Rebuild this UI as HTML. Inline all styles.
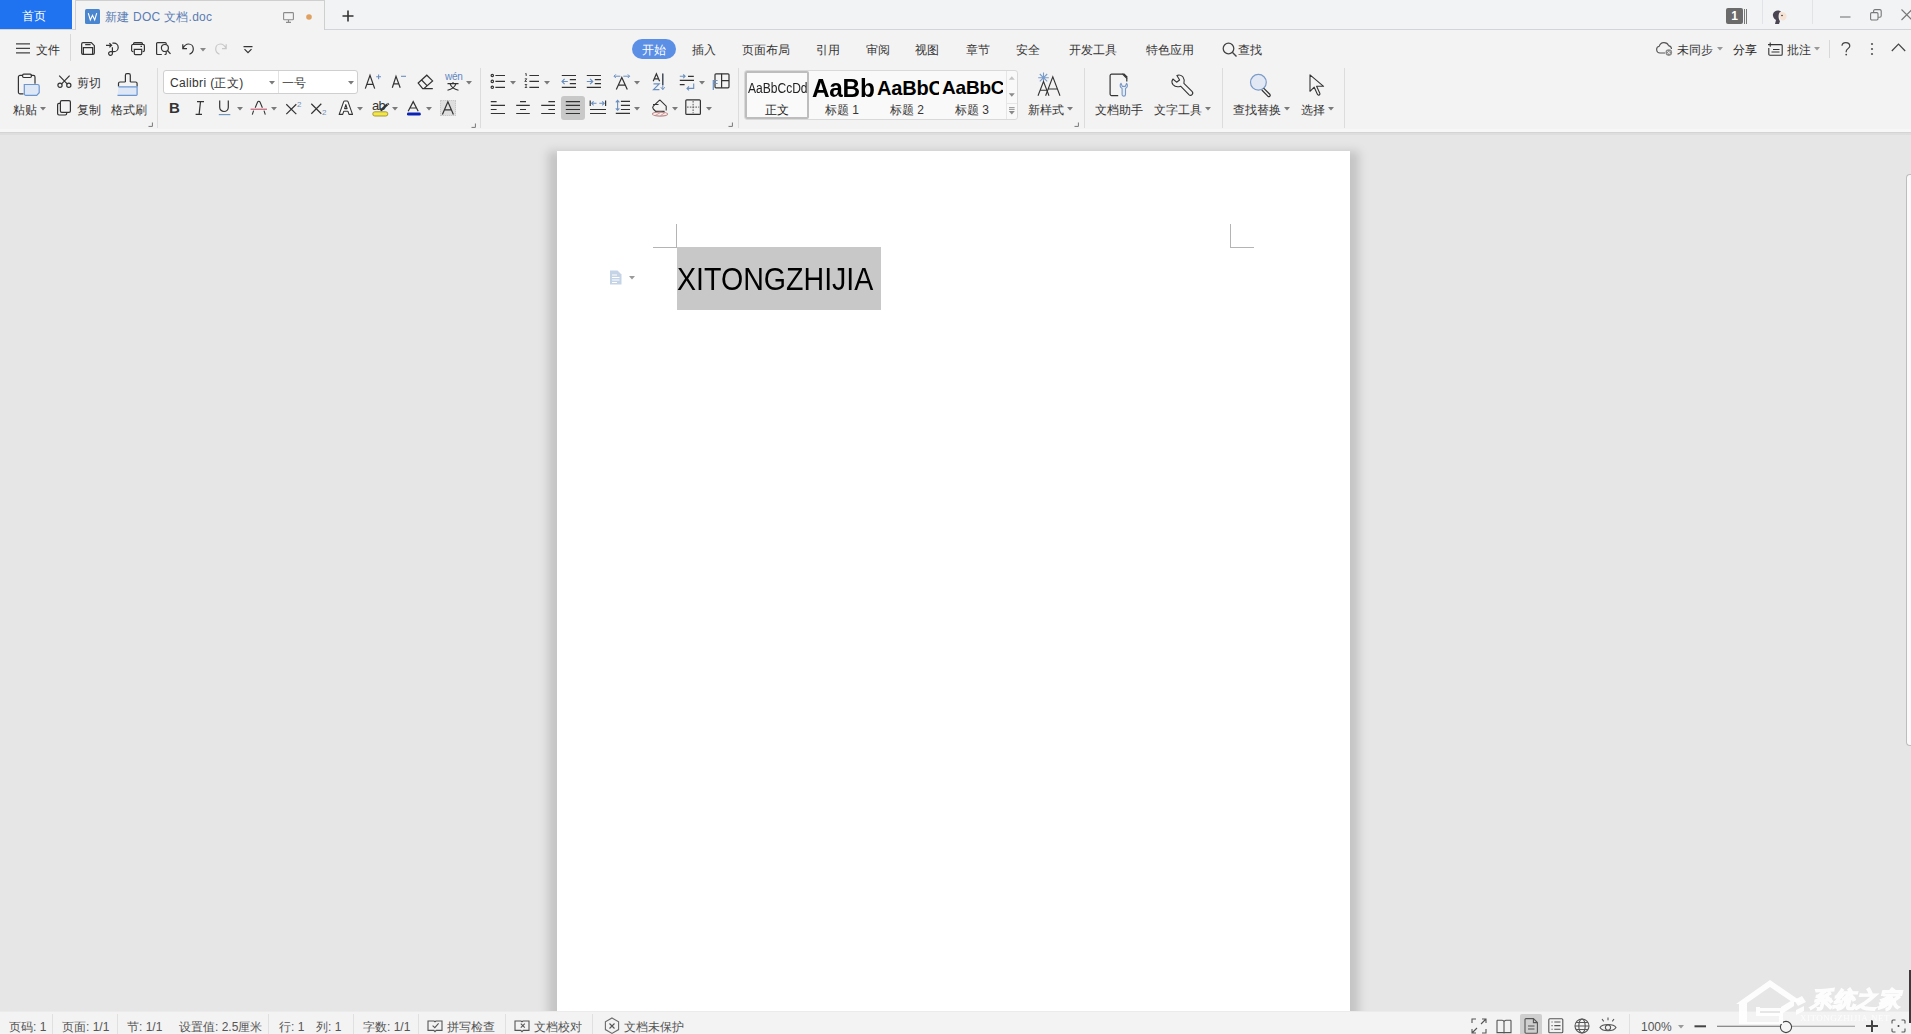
<!DOCTYPE html>
<html><head><meta charset="utf-8">
<style>
*{box-sizing:border-box;margin:0;padding:0}
html,body{width:1911px;height:1034px;overflow:hidden;background:#f3f3f3;font-family:"Liberation Sans",sans-serif;color:#353535}
.a{position:absolute}
.t{position:absolute;font-size:12px;line-height:14px;white-space:nowrap;z-index:2}
svg{position:absolute;overflow:visible}
#tabbar{left:0;top:0;width:1911px;height:29px;background:#f2f3f5}
#canvas{left:0;top:132px;width:1911px;height:879px;background:#e6e6e6}
#page{left:557px;top:151px;width:793px;height:860px;background:#fff}
#status{left:0;top:1011px;width:1911px;height:23px;background:#f3f3f3;border-top:1px solid #ebebeb}
.sep{position:absolute;width:1px;background:#dcdcdc}
.dd{position:absolute;width:0;height:0;border-left:3px solid transparent;border-right:3px solid transparent;border-top:3px solid #707070}
</style></head><body>
<div id="tabbar" class="a"></div>
<div class="a" style="left:0;top:29px;width:1911px;height:1px;background:#d2d4d8"></div>
<div class="a" style="left:0;top:0;width:72px;height:29px;background:#1f72f0"></div>
<div class="t" style="left:22px;top:9px;color:#fff">首页</div>
<div class="a" style="left:75px;top:0;width:250px;height:30px;background:#f3f3f3;border:1px solid #cfcfcf;border-bottom:none"></div>

<div id="canvas" class="a"></div>
<div class="a" style="left:0;top:129px;width:1911px;height:3px;background:#f7f7f7"></div>
<div class="a" style="left:0;top:132px;width:1911px;height:1px;background:#d4d4d4"></div><div class="a" style="left:0;top:133px;width:1911px;height:2px;background:#dedede"></div>
<div class="a" style="left:548px;top:151px;width:811px;height:880px;background:rgba(0,0,0,.145);filter:blur(5px)"></div><div id="page" class="a"></div>
<div id="status" class="a"></div>

<!-- tab bar -->
<div class="t" style="left:105px;top:10px;color:#5a7cb4;letter-spacing:0.25px">新建 DOC 文档.doc</div>
<!-- menu row -->
<div class="t" style="left:36px;top:43px;color:#333">文件</div>
<div class="a" style="left:632px;top:39px;width:44px;height:20px;border-radius:10px;background:#5b8fe6"></div>
<div class="t" style="left:642px;top:43px;color:#fff">开始</div>
<div class="t" style="left:692px;top:43px">插入</div>
<div class="t" style="left:742px;top:43px">页面布局</div>
<div class="t" style="left:816px;top:43px">引用</div>
<div class="t" style="left:866px;top:43px">审阅</div>
<div class="t" style="left:915px;top:43px">视图</div>
<div class="t" style="left:966px;top:43px">章节</div>
<div class="t" style="left:1016px;top:43px">安全</div>
<div class="t" style="left:1069px;top:43px">开发工具</div>
<div class="t" style="left:1146px;top:43px">特色应用</div>
<div class="t" style="left:1238px;top:43px">查找</div>
<div class="t" style="left:1677px;top:43px">未同步</div>
<div class="t" style="left:1733px;top:43px;color:#222">分享</div>
<div class="t" style="left:1787px;top:43px">批注</div>
<!-- ribbon labels -->
<div class="t" style="left:13px;top:103px">粘贴</div>
<div class="t" style="left:77px;top:76px">剪切</div>
<div class="t" style="left:77px;top:103px">复制</div>
<div class="t" style="left:111px;top:103px">格式刷</div>
<div class="t" style="left:765px;top:103px;color:#222">正文</div>
<div class="t" style="left:825px;top:103px">标题 1</div>
<div class="t" style="left:890px;top:103px">标题 2</div>
<div class="t" style="left:955px;top:103px">标题 3</div>
<div class="t" style="left:1028px;top:103px">新样式</div>
<div class="t" style="left:1095px;top:103px">文档助手</div>
<div class="t" style="left:1154px;top:103px">文字工具</div>
<div class="t" style="left:1233px;top:103px">查找替换</div>
<div class="t" style="left:1301px;top:103px">选择</div>
<!-- status -->
<div class="t" style="left:9px;top:1020px;color:#555">页码: 1</div>
<div class="t" style="left:62px;top:1020px;color:#555">页面: 1/1</div>
<div class="t" style="left:127px;top:1020px;color:#555">节: 1/1</div>
<div class="t" style="left:179px;top:1020px;color:#555">设置值: 2.5厘米</div>
<div class="t" style="left:279px;top:1020px;color:#555">行: 1</div>
<div class="t" style="left:316px;top:1020px;color:#555">列: 1</div>
<div class="t" style="left:363px;top:1020px;color:#555">字数: 1/1</div>
<div class="t" style="left:447px;top:1020px;color:#555">拼写检查</div>
<div class="t" style="left:534px;top:1020px;color:#555">文档校对</div>
<div class="t" style="left:624px;top:1020px;color:#555">文档未保护</div>
<div class="t" style="left:1641px;top:1020px;color:#555">100%</div>

<!-- page content -->
<div class="a" style="left:677px;top:247px;width:204px;height:63px;background:#c8c8c8"></div>
<div class="a" style="left:676px;top:224px;width:1px;height:24px;background:#b4b4b4"></div>
<div class="a" style="left:653px;top:247px;width:24px;height:1px;background:#b4b4b4"></div>
<div class="a" style="left:1230px;top:224px;width:1px;height:24px;background:#b4b4b4"></div>
<div class="a" style="left:1230px;top:247px;width:24px;height:1px;background:#b4b4b4"></div>
<div id="xt" class="t" style="left:677px;top:261px;font-size:30.5px;line-height:36px;color:#000;transform:scaleX(0.937);transform-origin:0 0">XITONGZHIJIA</div>
<svg style="left:85px;top:9px;" width="15" height="15" viewBox="0 0 15 15"><rect width="15" height="15" rx="1.5" fill="#4a86d0"/><path d="M3.3 4.2L5.3 11L7.5 6.2L9.7 11L11.7 4.2" fill="none" stroke="#fff" stroke-width="1.1"/></svg>
<svg style="left:283px;top:12px;" width="11" height="11" viewBox="0 0 11 11"><rect x="0.6" y="0.6" width="9.8" height="7.2" rx="0.8" fill="none" stroke="#8a8a8a" stroke-width="1.1"/><path d="M5.5 8V10.3M3 10.4H8" stroke="#8a8a8a" stroke-width="1.1"/></svg>
<svg style="left:306px;top:14px;" width="6" height="6" viewBox="0 0 6 6"><circle cx="3" cy="3" r="2.8" fill="#e0a060"/></svg>
<svg style="left:342px;top:10px;" width="12" height="12" viewBox="0 0 12 12"><path d="M6 0.5V11.5M0.5 6H11.5" stroke="#333" stroke-width="1.6"/></svg>
<div class="a" style="left:1726px;top:8px;width:17px;height:16px;border-radius:2px;background:#6b6b6b"></div>
<div class="t" style="left:1726px;top:9px;width:17px;text-align:center;color:#fff;font-size:12px;font-weight:bold">1</div>
<div class="a" style="left:1744px;top:9px;width:1px;height:15px;background:#777"></div>
<div class="a" style="left:1746px;top:9px;width:1px;height:15px;background:#777"></div>
<div class="a" style="left:1762px;top:0px;width:1px;height:24px;background:#e2e3e6"></div>
<div class="a" style="left:1812px;top:0px;width:1px;height:24px;background:#e2e3e6"></div>
<svg style="left:1771px;top:9px;" width="17" height="15" viewBox="0 0 17 15"><path d="M2 5C3 1.5 7 0.5 10 2.5L8 4.5C7 8 8 11 9 12L8 15H4L5 11C2.5 9.5 1.5 7 2 5Z" fill="#4a4452"/><path d="M8.5 3.5C11 2.5 14.5 3.5 15.5 6C16 8 15 11 12 11.5C10 11.5 9 10 8.5 8Z" fill="#f5e3d5"/><circle cx="11" cy="6.5" r="0.8" fill="#333"/></svg>
<svg style="left:1840px;top:16px;" width="11" height="2" viewBox="0 0 11 2"><path d="M0 1H10.5" stroke="#777" stroke-width="1.1"/></svg>
<svg style="left:1870px;top:9px;" width="12" height="12" viewBox="0 0 12 12"><rect x="0.6" y="3.6" width="7.4" height="7.4" rx="1.2" fill="none" stroke="#777" stroke-width="1.1"/><path d="M3.6 3.5V2.2A1.4 1.4 0 0 1 5 0.6H9.8A1.4 1.4 0 0 1 11.2 2V6.8A1.4 1.4 0 0 1 9.8 8.2H8.1" fill="none" stroke="#777" stroke-width="1.1"/></svg>
<svg style="left:1901px;top:9px;" width="12" height="12" viewBox="0 0 12 12"><path d="M0.5 0.5L11 11M11 0.5L0.5 11" stroke="#777" stroke-width="1.1"/></svg>
<svg style="left:16px;top:43px;" width="14" height="11" viewBox="0 0 14 11"><path d="M0 0.8H14M0 5.3H14M0 9.8H14" stroke="#444" stroke-width="1.2"/></svg>
<div class="a" style="left:70px;top:34px;width:1px;height:27px;background:#d8d8d8"></div>
<svg style="left:81px;top:42px;" width="14" height="13" viewBox="0 0 14 13"><path d="M0.65 2A1.4 1.4 0 0 1 2 0.65H10.3L13.35 3.7V11A1.4 1.4 0 0 1 12 12.35H2A1.4 1.4 0 0 1 0.65 11Z M4.2 2.6H9.6 M2.4 12.3V5.6H11.6V12.3" fill="none" stroke="#333" stroke-width="1.2"/></svg>
<svg style="left:106px;top:42px;" width="14" height="14" viewBox="0 0 14 14"><path d="M0 3.3H5.3M3.4 1.2L5.6 3.3L3.4 5.4" fill="none" stroke="#333" stroke-width="1.2"/><path d="M6.4 1.2H8A4.2 4.2 0 0 1 8 9.6H4.9A1.9 1.9 0 1 0 6.4 11.5V5.2" fill="none" stroke="#333" stroke-width="1.2"/></svg>
<svg style="left:131px;top:42px;" width="14" height="13" viewBox="0 0 14 13"><path d="M2.6 2.3V1.6A1 1 0 0 1 3.6 0.6H10.4A1 1 0 0 1 11.4 1.6V2.3 M2.3 9.6H2A1.4 1.4 0 0 1 0.6 8.2V3.8A1.4 1.4 0 0 1 2 2.4H12A1.4 1.4 0 0 1 13.4 3.8V8.2A1.4 1.4 0 0 1 12 9.6H11.7 M9.5 4.4H11 M3.3 7.3H10.7V11.6A1 1 0 0 1 9.7 12.6H4.3A1 1 0 0 1 3.3 11.6Z" fill="none" stroke="#333" stroke-width="1.2"/></svg>
<svg style="left:156px;top:42px;" width="15" height="14" viewBox="0 0 15 14"><path d="M5.8 12.5H1.6A1 1 0 0 1 0.6 11.5V1.6A1 1 0 0 1 1.6 0.6H9.2A1 1 0 0 1 10.2 1.6V2.4 M10.2 9.5V11.5A1 1 0 0 1 9.2 12.5H8.5" fill="none" stroke="#333" stroke-width="1.2"/><circle cx="8.9" cy="6" r="3.5" fill="none" stroke="#333" stroke-width="1.2"/><path d="M11.4 8.5L14.5 11.8" fill="none" stroke="#333" stroke-width="1.2"/></svg>
<svg style="left:182px;top:43px;" width="12" height="12" viewBox="0 0 12 12"><path d="M1 5.2C2.5 2.3 4.2 1 6.5 1C9.3 1 11.3 3.2 11.3 6C11.3 8.6 9.5 10.4 7.5 11.3M0.8 1.3V5.6H5" fill="none" stroke="#333" stroke-width="1.2"/></svg>
<svg style="left:200px;top:48px" width="6" height="4" viewBox="0 0 6 4"><path d="M0 0H6L3 3.5Z" fill="#888"/></svg>
<svg style="left:215px;top:43px;" width="12" height="12" viewBox="0 0 12 12"><path d="M11 5.2C9.5 2.3 7.8 1 5.5 1C2.7 1 0.7 3.2 0.7 6C0.7 8.6 2.5 10.4 4.5 11.3M11.2 1.3V5.6H7" fill="none" stroke="#c8c8c8" stroke-width="1.2"/></svg>
<svg style="left:243px;top:46px;" width="10" height="8" viewBox="0 0 10 8"><path d="M0.5 0.6H9.5M1.5 3.2L5 6.7L8.5 3.2" fill="none" stroke="#333" stroke-width="1.2"/></svg>
<svg style="left:1222px;top:42px;" width="16" height="16" viewBox="0 0 16 16"><circle cx="6.5" cy="6.5" r="5.3" fill="none" stroke="#444" stroke-width="1.3"/><path d="M10.3 10.3L14.5 14.5" stroke="#444" stroke-width="1.4"/></svg>
<svg style="left:1656px;top:41px;" width="18" height="15" viewBox="0 0 18 15"><path d="M9 12H4A3.4 3.4 0 0 1 3.2 5.3A5 5 0 0 1 12.6 4.6A3.6 3.6 0 0 1 15.5 8" fill="none" stroke="#555" stroke-width="1.1"/><circle cx="12.8" cy="11.6" r="3.3" fill="#8a8a8a"/><path d="M11.4 10.2L14.2 13M14.2 10.2L11.4 13" stroke="#fff" stroke-width="0.9"/></svg>
<svg style="left:1717px;top:47px" width="6" height="4" viewBox="0 0 6 4"><path d="M0 0H6L3 3.5Z" fill="#999"/></svg>
<svg style="left:1768px;top:42px;" width="15" height="14" viewBox="0 0 15 14"><path d="M3.5 2.6H13.2A1 1 0 0 1 14.2 3.6V12.2A1 1 0 0 1 13.2 13.2H1.8A1 1 0 0 1 0.8 12.2V6 M0 2.6H4.4M2.2 0.4V4.8 M5 7.5H11.5M3.5 10H11.5" fill="none" stroke="#333" stroke-width="1.1"/></svg>
<svg style="left:1814px;top:47px" width="6" height="4" viewBox="0 0 6 4"><path d="M0 0H6L3 3.5Z" fill="#999"/></svg>
<div class="a" style="left:1829px;top:40px;width:1px;height:18px;background:#d8d8d8"></div>
<svg style="left:1841px;top:42px;" width="10" height="14" viewBox="0 0 10 14"><path d="M1 3.8C1 1.8 2.8 0.6 4.8 0.6C7 0.6 8.8 2 8.8 4C8.8 6.5 5.2 6.8 5.2 9.3V10.2" fill="none" stroke="#444" stroke-width="1.2"/><circle cx="5.2" cy="12.6" r="0.9" fill="#444"/></svg>
<svg style="left:1870px;top:42px;" width="4" height="14" viewBox="0 0 4 14"><circle cx="2" cy="2" r="1.1" fill="#555"/><circle cx="2" cy="7" r="1.1" fill="#555"/><circle cx="2" cy="12" r="1.1" fill="#555"/></svg>
<svg style="left:1891px;top:43px;" width="15" height="9" viewBox="0 0 15 9"><path d="M0.8 8L7.5 1.2L14.2 8" fill="none" stroke="#444" stroke-width="1.2"/></svg>
<svg style="left:17px;top:73px;" width="24" height="24" viewBox="0 0 24 24"><path d="M5.2 2.4H3A1.6 1.6 0 0 0 1.4 4V19.2A1.6 1.6 0 0 0 3 20.8H6.5 M13.8 2.4H16.4A1.6 1.6 0 0 1 18 4V10.8" fill="none" stroke="#333" stroke-width="1.2"/><rect x="5.6" y="1.1" width="8.8" height="3.4" rx="1.2" fill="none" stroke="#333" stroke-width="1.2"/><path d="M7.3 11.5H20.6A1.6 1.6 0 0 1 22.2 13.1V19.7L19.7 22.3H8.9A1.6 1.6 0 0 1 7.3 20.7Z" fill="#dde7f5" stroke="#6b96cf" stroke-width="1.2"/></svg>
<svg style="left:40px;top:107px" width="6" height="4" viewBox="0 0 6 4"><path d="M0 0H6L3 3.5Z" fill="#7a7a7a"/></svg>
<svg style="left:57px;top:75px;" width="15" height="13" viewBox="0 0 15 13"><path d="M2.2 0.6L10.4 9.1M12.6 0.6L4.4 9.1" fill="none" stroke="#333" stroke-width="1.2"/><circle cx="3" cy="10.3" r="2.1" fill="none" stroke="#333" stroke-width="1.2"/><circle cx="11.8" cy="10.3" r="2.1" fill="none" stroke="#333" stroke-width="1.2"/></svg>
<svg style="left:57px;top:100px;" width="15" height="16" viewBox="0 0 15 16"><path d="M3.2 3.3H2A1.4 1.4 0 0 0 0.6 4.7V13.6A1.4 1.4 0 0 0 2 15H8.3A1.4 1.4 0 0 0 9.7 13.6V12.6" fill="none" stroke="#333" stroke-width="1.2"/><rect x="3.4" y="0.6" width="10" height="11.8" rx="1.4" fill="none" stroke="#333" stroke-width="1.2"/></svg>
<svg style="left:117px;top:73px;" width="23" height="24" viewBox="0 0 23 24"><path d="M8.4 9V2.2A1.5 1.5 0 0 1 9.9 0.7H11.8A1.5 1.5 0 0 1 13.3 2.2V9 M8.4 9H3A1.5 1.5 0 0 0 1.5 10.5V13.5 M13.3 9H18.6A1.5 1.5 0 0 1 20.1 10.5V13.5" fill="none" stroke="#333" stroke-width="1.2"/><path d="M1.5 13.8H20.1V21.5A0.8 0.8 0 0 1 19.3 22.3H0.5" fill="#dde7f5" stroke="#6b96cf" stroke-width="1.2"/></svg>
<svg style="left:148px;top:122px;" width="5" height="5" viewBox="0 0 5 5"><path d="M0.5 4.4H4.4V0.5" fill="none" stroke="#777" stroke-width="1"/></svg>
<div class="a" style="left:157px;top:68px;width:1px;height:60px;background:#dcdcdc"></div>
<div class="a" style="left:163px;top:70px;width:195px;height:24px;background:#fff;border:1px solid #cfcfcf;border-radius:3px"></div>
<div class="a" style="left:278px;top:71px;width:1px;height:22px;background:#e2e2e2"></div>
<div class="t" style="left:170px;top:76px;color:#333;letter-spacing:0.35px">Calibri (正文)</div>
<div class="t" style="left:282px;top:76px;color:#333">一号</div>
<svg style="left:269px;top:81px" width="6" height="4" viewBox="0 0 6 4"><path d="M0 0H6L3 3.5Z" fill="#7a7a7a"/></svg>
<svg style="left:348px;top:81px" width="6" height="4" viewBox="0 0 6 4"><path d="M0 0H6L3 3.5Z" fill="#7a7a7a"/></svg>
<svg style="left:364px;top:74px;" width="18" height="16" viewBox="0 0 18 16"><path d="M1.3 14.6L6 1.3L10.7 14.6M2.7 10.4H9.3" fill="none" stroke="#333" stroke-width="1.2"/><path d="M14.6 0.4V5.2M12.2 2.8H17" fill="none" stroke="#6a8fc0" stroke-width="1.1"/></svg>
<svg style="left:391px;top:75px;" width="16" height="14" viewBox="0 0 16 14"><path d="M1.3 12.7L5 1.3L9.2 12.7M2.6 8.9H8" fill="none" stroke="#333" stroke-width="1.2"/><path d="M10 1.3H15" fill="none" stroke="#6a8fc0" stroke-width="1.1"/></svg>
<svg style="left:417px;top:74px;" width="17" height="16" viewBox="0 0 17 16"><path d="M1.2 9L9.8 1.2L15.6 6.9L6.8 14.7H5.7Z M4.6 6L10.3 11.8 M5.6 14.6H15.8" fill="none" stroke="#333" stroke-width="1.2"/></svg>
<div class="t" style="left:445px;top:71px;font-size:10px;line-height:12px;color:#5f86c0;letter-spacing:-0.3px">wén</div>
<svg style="left:447px;top:82px;" width="12" height="9" viewBox="0 0 12 9"><path d="M6 0V1.6M0.5 1.6H11.5M3 1.8C4.4 5.6 7.6 7.4 11.5 8.2M9 1.8C7.6 5.6 4.4 7.4 0.5 8.2" fill="none" stroke="#333" stroke-width="1.1"/></svg>
<svg style="left:466px;top:81px" width="6" height="4" viewBox="0 0 6 4"><path d="M0 0H6L3 3.5Z" fill="#7a7a7a"/></svg>
<div class="t" style="left:169px;top:100px;font-size:15px;line-height:16px;font-weight:bold;color:#333">B</div>
<svg style="left:195px;top:101px;" width="10" height="14" viewBox="0 0 10 14"><path d="M2 0.6H9M0.6 13.4H7M5.5 0.6L4.1 13.4" fill="none" stroke="#333" stroke-width="1.2"/></svg>
<svg style="left:218px;top:100px;" width="14" height="16" viewBox="0 0 14 16"><path d="M1.7 0.5V7.2A4.3 4.3 0 0 0 10.3 7.2V0.5" fill="none" stroke="#333" stroke-width="1.2"/><path d="M0.8 14.6H12.3" stroke="#6f97bf" stroke-width="1.2"/></svg>
<svg style="left:237px;top:107px" width="6" height="4" viewBox="0 0 6 4"><path d="M0 0H6L3 3.5Z" fill="#7a7a7a"/></svg>
<svg style="left:250px;top:100px;" width="18" height="16" viewBox="0 0 18 16"><path d="M2.3 14.6L3.6 10.6M5.2 7.8L7.6 2A1.3 1.3 0 0 1 10 2L12.4 7.8M14 10.6L15.3 14.6" fill="none" stroke="#333" stroke-width="1.1"/><path d="M0.6 9.2H17" stroke="#c0506a" stroke-width="1.1"/></svg>
<svg style="left:271px;top:107px" width="6" height="4" viewBox="0 0 6 4"><path d="M0 0H6L3 3.5Z" fill="#7a7a7a"/></svg>
<svg style="left:285px;top:101px;" width="17" height="14" viewBox="0 0 17 14"><path d="M1.3 3.2L11.3 13.1M11.3 3.2L1.3 13.1" fill="none" stroke="#333" stroke-width="1.2"/></svg>
<div class="t" style="left:297px;top:100px;font-size:8px;line-height:9px;color:#6f8fb8">2</div>
<svg style="left:310px;top:101px;" width="17" height="15" viewBox="0 0 17 15"><path d="M1.3 2.8L11.3 12.7M11.3 2.8L1.3 12.7" fill="none" stroke="#333" stroke-width="1.2"/></svg>
<div class="t" style="left:322px;top:108px;font-size:8px;line-height:9px;color:#6f8fb8">2</div>
<svg style="left:338px;top:100px;" width="16" height="16" viewBox="0 0 16 16"><path d="M1.2 14.4L5.7 1.6A1 1 0 0 1 6.6 1H9.1A1 1 0 0 1 10 1.6L14.5 14.4H11L10 11.3H5.7L4.7 14.4Z M7.85 4.6L6.6 8.6H9.1Z" fill="#fafafa" stroke="#333" stroke-width="1.1" stroke-linejoin="round"/></svg>
<svg style="left:357px;top:107px" width="6" height="4" viewBox="0 0 6 4"><path d="M0 0H6L3 3.5Z" fill="#7a7a7a"/></svg>
<div class="t" style="left:372px;top:99px;font-size:13px;line-height:14px;color:#333;letter-spacing:-0.8px">ab</div>
<svg style="left:379px;top:102px;" width="11" height="10" viewBox="0 0 11 10"><path d="M1.6 8.6L8.4 2.4" stroke="#333" stroke-width="2.3"/><path d="M8.6 1.2L10 2.6" stroke="#333" stroke-width="1.2"/></svg>
<svg style="left:372px;top:111px;" width="17" height="6" viewBox="0 0 17 6"><rect x="0.8" y="0.8" width="15" height="4.2" rx="2" fill="#f2e64a" stroke="#a89a30" stroke-width="1"/></svg>
<svg style="left:392px;top:107px" width="6" height="4" viewBox="0 0 6 4"><path d="M0 0H6L3 3.5Z" fill="#7a7a7a"/></svg>
<svg style="left:406px;top:100px;" width="16" height="16" viewBox="0 0 16 16"><path d="M2.2 11.2L7.2 1.6L12.2 11.2M3.8 8H10.6" fill="none" stroke="#333" stroke-width="1.2"/><rect x="1" y="12.6" width="13.8" height="3" rx="1.4" fill="#0a23b4"/></svg>
<svg style="left:426px;top:107px" width="6" height="4" viewBox="0 0 6 4"><path d="M0 0H6L3 3.5Z" fill="#7a7a7a"/></svg>
<div class="a" style="left:440px;top:100px;width:16px;height:16px;background:#dedede;border:1px dotted #c8c8c8"></div>
<svg style="left:441px;top:101px;" width="14" height="14" viewBox="0 0 14 14"><path d="M1.4 13.4L6.9 0.8L12.4 13.4M3.4 8.9H10.4" fill="none" stroke="#333" stroke-width="1.2"/></svg>
<svg style="left:471px;top:123px;" width="5" height="5" viewBox="0 0 5 5"><path d="M0.5 4.4H4.4V0.5" fill="none" stroke="#777" stroke-width="1"/></svg>
<div class="a" style="left:480px;top:68px;width:1px;height:60px;background:#dcdcdc"></div>
<svg style="left:490px;top:74px;" width="16" height="15" viewBox="0 0 16 15"><circle cx="2.3" cy="1.5" r="1.2" fill="none" stroke="#333" stroke-width="1.2"/><circle cx="2.3" cy="7.4" r="1.2" fill="none" stroke="#333" stroke-width="1.2"/><circle cx="2.3" cy="13.3" r="1.2" fill="none" stroke="#333" stroke-width="1.2"/><path d="M5.4 1.5H15M5.4 7.4H15M5.4 13.3H15" fill="none" stroke="#333" stroke-width="1.2"/></svg>
<svg style="left:510px;top:81px" width="6" height="4" viewBox="0 0 6 4"><path d="M0 0H6L3 3.5Z" fill="#7a7a7a"/></svg>
<svg style="left:524px;top:73px;" width="16" height="16" viewBox="0 0 16 16"><path d="M1.2 0.8L2.2 0.5V3 M0.8 5.8H2.8L0.8 8.4H2.9 M0.8 11.5H2.8L1.7 13L2.8 14.5H0.8" fill="none" stroke="#333" stroke-width="0.9"/><path d="M5.4 2.5H15M5.4 8.4H15M5.4 14.3H15" fill="none" stroke="#333" stroke-width="1.2"/></svg>
<svg style="left:544px;top:81px" width="6" height="4" viewBox="0 0 6 4"><path d="M0 0H6L3 3.5Z" fill="#7a7a7a"/></svg>
<svg style="left:561px;top:74px;" width="16" height="15" viewBox="0 0 16 15"><path d="M0.8 1.5H15M8.8 5.6H15M8.8 9.6H15M0.8 13.3H15" fill="none" stroke="#333" stroke-width="1.2"/><path d="M1.2 7.5H6.8M3.6 4.8L1 7.5L3.6 10.2" fill="none" stroke="#6a8fc0" stroke-width="1.2"/></svg>
<svg style="left:586px;top:74px;" width="16" height="15" viewBox="0 0 16 15"><path d="M0.8 1.5H15M8.8 5.6H15M8.8 9.6H15M0.8 13.3H15" fill="none" stroke="#333" stroke-width="1.2"/><path d="M0.8 7.5H6.5M4.1 4.8L6.7 7.5L4.1 10.2" fill="none" stroke="#6a8fc0" stroke-width="1.2"/></svg>
<svg style="left:490px;top:100px;" width="16" height="15" viewBox="0 0 16 15"><path d="M0.8 1.6H6.6M0.8 5.4H15M0.8 9.5H6.6M0.8 13.5H15" fill="none" stroke="#333" stroke-width="1.2"/></svg>
<svg style="left:515px;top:100px;" width="16" height="15" viewBox="0 0 16 15"><path d="M5 1.6H11M1.2 5.4H14.8M5 9.5H11M1.2 13.5H14.8" fill="none" stroke="#333" stroke-width="1.2"/></svg>
<svg style="left:540px;top:100px;" width="16" height="15" viewBox="0 0 16 15"><path d="M8.4 1.6H15M1.2 5.4H15M8.4 9.5H15M1.2 13.5H15" fill="none" stroke="#333" stroke-width="1.2"/></svg>
<div class="a" style="left:561px;top:96px;width:24px;height:24px;background:#c8c8c8;border-radius:3px"></div>
<svg style="left:565px;top:100px;" width="16" height="15" viewBox="0 0 16 15"><path d="M0.8 1.6H15M0.8 5.4H15M0.8 9.5H15M0.8 13.5H15" fill="none" stroke="#333" stroke-width="1.2"/></svg>
<svg style="left:589px;top:100px;" width="18" height="15" viewBox="0 0 18 15"><path d="M1.2 0.4V6M16.6 0.4V6 M1 9.5H17M1 13.5H17" fill="none" stroke="#333" stroke-width="1.2"/><path d="M2.6 3.3H7.5M4.6 1.3L2.6 3.3L4.6 5.3 M10.3 3.3H15.2M13.2 1.3L15.2 3.3L13.2 5.3" fill="none" stroke="#6a8fc0" stroke-width="1.1"/></svg>
<svg style="left:613px;top:73px;" width="18" height="17" viewBox="0 0 18 17"><path d="M3.3 16.6L8.8 4.5L14.3 16.6M5.4 12.2H12.2" fill="none" stroke="#333" stroke-width="1.2"/><path d="M1 3.2H7.3M2.8 1.4L1 3.2L2.8 5 M10.3 3.2H16.6M14.8 1.4L16.6 3.2L14.8 5" fill="none" stroke="#6a8fc0" stroke-width="1"/></svg>
<svg style="left:634px;top:81px" width="6" height="4" viewBox="0 0 6 4"><path d="M0 0H6L3 3.5Z" fill="#7a7a7a"/></svg>
<svg style="left:652px;top:73px;" width="15" height="18" viewBox="0 0 15 18"><path d="M1.2 8.3L4.4 0.8L7.6 8.3M2.4 5.8H6.4" fill="none" stroke="#333" stroke-width="1.2"/><path d="M1.5 10.8H7.2L1.5 16.6H7.4" fill="none" stroke="#6a8fc0" stroke-width="1.2"/><path d="M10.8 0.6V16.5M8.8 14.2L10.8 16.6L12.8 14.2" fill="none" stroke="#6a8fc0" stroke-width="1"/><path d="M10.8 0.6V12" stroke="#333" stroke-width="1.1"/></svg>
<svg style="left:679px;top:74px;" width="17" height="16" viewBox="0 0 17 16"><path d="M0.8 2.3H6M4.2 0.5L6.1 2.3L4.2 4.1 M10 16.4L8 14.4L10 12.4 M8 14.4H14.7V9.5" fill="none" stroke="#6a8fc0" stroke-width="1.1"/><path d="M9 2.3H14.8M0.8 6.3H15M0.8 10.6H5.6" fill="none" stroke="#333" stroke-width="1.2"/></svg>
<svg style="left:699px;top:81px" width="6" height="4" viewBox="0 0 6 4"><path d="M0 0H6L3 3.5Z" fill="#7a7a7a"/></svg>
<svg style="left:712px;top:73px;" width="18" height="18" viewBox="0 0 18 18"><rect x="3" y="0.8" width="14" height="14" rx="1" fill="none" stroke="#333" stroke-width="1.2"/><path d="M9.6 0.8V14.8M9.6 7.6H17" fill="none" stroke="#333" stroke-width="1.2"/><path d="M1.3 17V7.5H5.6M1.3 10.5H5.6" fill="none" stroke="#6a8fc0" stroke-width="1.2"/></svg>
<svg style="left:615px;top:100px;" width="16" height="15" viewBox="0 0 16 15"><path d="M5.9 1.3H15M5.9 5.4H15M5.9 9.5H15M0.8 13.4H15" fill="none" stroke="#333" stroke-width="1.2"/><path d="M2.6 0.5V10M0.8 2.3L2.6 0.4L4.4 2.3M0.8 8.3L2.6 10.2L4.4 8.3" fill="none" stroke="#6a8fc0" stroke-width="1.1"/></svg>
<svg style="left:634px;top:107px" width="6" height="4" viewBox="0 0 6 4"><path d="M0 0H6L3 3.5Z" fill="#7a7a7a"/></svg>
<svg style="left:651px;top:99px;" width="18" height="18" viewBox="0 0 18 18"><path d="M2 5.5H7.5 M8.8 0.8L15.2 7.2V11.6 M8.8 0.8L2.3 7.2C1.6 8 1.6 9.2 2.3 10L4.7 12.4H13.6" fill="none" stroke="#333" stroke-width="1.1"/><ellipse cx="9" cy="15.1" rx="7.6" ry="2" fill="#f6eded" stroke="#c08a8a" stroke-width="1.1"/><path d="M4 16.6L9.5 13.5M9.5 16.6L14 13.6" stroke="#c08a8a" stroke-width="0.8"/></svg>
<svg style="left:672px;top:107px" width="6" height="4" viewBox="0 0 6 4"><path d="M0 0H6L3 3.5Z" fill="#7a7a7a"/></svg>
<svg style="left:685px;top:99px;" width="17" height="17" viewBox="0 0 17 17"><rect x="0.8" y="0.8" width="14.6" height="14.6" rx="1" fill="none" stroke="#333" stroke-width="1.2"/><path d="M8.1 2V14.2M2 8.1H14.2" fill="none" stroke="#555" stroke-width="1" stroke-dasharray="1.6 1.2"/></svg>
<svg style="left:706px;top:107px" width="6" height="4" viewBox="0 0 6 4"><path d="M0 0H6L3 3.5Z" fill="#7a7a7a"/></svg>
<svg style="left:728px;top:122px;" width="5" height="5" viewBox="0 0 5 5"><path d="M0.5 4.4H4.4V0.5" fill="none" stroke="#777" stroke-width="1"/></svg>
<div class="a" style="left:738px;top:68px;width:1px;height:60px;background:#dcdcdc"></div>
<div class="a" style="left:744px;top:70px;width:274px;height:50px;background:#f9f9f9;border:1px solid #d9d9d9;border-radius:3px"></div>
<div class="a" style="left:745px;top:71px;width:64px;height:48px;background:#fafafa;border:2px solid #bdbdbd;border-radius:2px"></div>
<div class="t" style="left:748px;top:80px;font-size:14px;line-height:16px;color:#222;letter-spacing:0px;transform:scaleX(0.86);transform-origin:0 0">AaBbCcDd</div>
<div class="t" style="left:812px;top:74px;font-size:26.5px;line-height:28px;font-weight:bold;color:#000;letter-spacing:-0.3px;transform:scaleX(0.92);transform-origin:0 0">AaBb</div>
<div class="a" style="left:877px;top:74px;width:62px;height:26px;overflow:hidden"><div class="t" style="left:0;top:2px;font-size:20px;line-height:24px;font-weight:bold;color:#000;letter-spacing:-0.2px">AaBbCc</div></div>
<div class="a" style="left:942px;top:74px;width:61px;height:26px;overflow:hidden"><div class="t" style="left:0;top:2px;font-size:19px;line-height:24px;font-weight:bold;color:#000;letter-spacing:-0.2px">AaBbCc</div></div>
<div class="a" style="left:1006px;top:71px;width:1px;height:48px;background:#e6e6e6"></div>
<div class="a" style="left:1006px;top:103px;width:11px;height:1px;background:#e6e6e6"></div>
<svg style="left:1008px;top:75px;" width="8" height="6" viewBox="0 0 8 6"><path d="M0.8 4.8L3.8 1.2L6.8 4.8Z" fill="#c4c4c4"/></svg>
<svg style="left:1008px;top:92px;" width="8" height="6" viewBox="0 0 8 6"><path d="M0.8 1.2L3.8 4.8L6.8 1.2Z" fill="#8a8a8a"/></svg>
<svg style="left:1008px;top:107px;" width="8" height="8" viewBox="0 0 8 8"><path d="M1 0.6H6.6M1 2.4H6.6" stroke="#8a8a8a" stroke-width="0.9"/><path d="M0.8 4L3.8 7.4L6.8 4Z" fill="#8a8a8a"/></svg>
<svg style="left:1037px;top:72px;" width="26" height="25" viewBox="0 0 26 25"><path d="M6.5 0.5V11M1.2 5.7H11.8M2.8 2L10.2 9.4M10.2 2L2.8 9.4" fill="none" stroke="#7a9cca" stroke-width="1.1"/><path d="M1 23.8L6.5 9.5L12 23.8M3.2 18.2H9.8" fill="none" stroke="#333" stroke-width="1.1"/><path d="M8.6 23.8L15.8 4.8L23 23.8M11.2 17H20.4" fill="none" stroke="#333" stroke-width="1.1"/></svg>
<svg style="left:1067px;top:107px" width="6" height="4" viewBox="0 0 6 4"><path d="M0 0H6L3 3.5Z" fill="#7a7a7a"/></svg>
<svg style="left:1074px;top:122px;" width="5" height="5" viewBox="0 0 5 5"><path d="M0.5 4.4H4.4V0.5" fill="none" stroke="#777" stroke-width="1"/></svg>
<div class="a" style="left:1084px;top:68px;width:1px;height:60px;background:#dcdcdc"></div>
<svg style="left:1109px;top:73px;" width="22" height="25" viewBox="0 0 22 25"><path d="M9.2 22.6H2.6A1.5 1.5 0 0 1 1.1 21.1V2.7A1.5 1.5 0 0 1 2.6 1.2H13.6L17.8 5.4V8.6" fill="none" stroke="#333" stroke-width="1.2"/><path d="M13.2 0.6H15.4L18.4 3.6V5.8Z" fill="#333"/><path d="M12 10.3C10.6 12 10.9 14.5 13.1 15.4V21.4A1.7 1.7 0 0 0 16.5 21.4V15.4C18.7 14.5 19 12 17.6 10.3L16.3 13.4H13.3Z" fill="#e4ecf7" stroke="#7a98c4" stroke-width="1.1" stroke-linejoin="round"/></svg>
<svg style="left:1170px;top:74px;" width="24" height="23" viewBox="0 0 24 23"><path d="M6.9 1.5C8.5 0.8 11.5 1 13 3C14.3 4.8 14.4 7.5 13.9 9.4L22 17.4A2.2 2.2 0 0 1 18.9 20.6L10.6 12.2C8.3 13 5 12.9 3 10.6C1.8 9 1.8 6.5 2.9 5L6.6 8.2L9.6 6Z" fill="none" stroke="#333" stroke-width="1.1" stroke-linejoin="round"/></svg>
<svg style="left:1205px;top:107px" width="6" height="4" viewBox="0 0 6 4"><path d="M0 0H6L3 3.5Z" fill="#7a7a7a"/></svg>
<div class="a" style="left:1222px;top:68px;width:1px;height:60px;background:#dcdcdc"></div>
<svg style="left:1249px;top:73px;" width="24" height="24" viewBox="0 0 24 24"><circle cx="9.4" cy="9.3" r="7.9" fill="#e2e9f4" stroke="#7b9bc8" stroke-width="1.2"/><path d="M14.6 15.1L21 21.5A1.4 1.4 0 0 1 19 23.4L12.8 17" fill="none" stroke="#333" stroke-width="1.2"/></svg>
<svg style="left:1284px;top:107px" width="6" height="4" viewBox="0 0 6 4"><path d="M0 0H6L3 3.5Z" fill="#7a7a7a"/></svg>
<svg style="left:1309px;top:74px;" width="17" height="23" viewBox="0 0 17 23"><path d="M1 0.8V17.3L5.2 13.2L8.4 20.3A1.3 1.3 0 0 0 10.8 19.2L7.6 12.3H14.6Z" fill="none" stroke="#333" stroke-width="1.1" stroke-linejoin="round"/></svg>
<svg style="left:1328px;top:107px" width="6" height="4" viewBox="0 0 6 4"><path d="M0 0H6L3 3.5Z" fill="#7a7a7a"/></svg>
<div class="a" style="left:1344px;top:68px;width:1px;height:60px;background:#dcdcdc"></div>
<svg style="left:609px;top:270px;" width="15" height="15" viewBox="0 0 15 15"><path d="M1 0.5H8.5L12.5 4.5V14.5H1Z" fill="#c5d3e6"/><path d="M3 5H8M3 7.5H10.5M3 10H10.5M3 12.5H8" stroke="#fff" stroke-width="1"/></svg>
<svg style="left:629px;top:276px" width="6" height="4" viewBox="0 0 6 4"><path d="M0 0H6L3 3.5Z" fill="#9a9a9a"/></svg>
<div class="a" style="left:52px;top:1014px;width:1px;height:20px;background:#e0e0e0"></div>
<div class="a" style="left:117px;top:1014px;width:1px;height:20px;background:#e0e0e0"></div>
<div class="a" style="left:268px;top:1014px;width:1px;height:20px;background:#e0e0e0"></div>
<div class="a" style="left:353px;top:1014px;width:1px;height:20px;background:#e0e0e0"></div>
<div class="a" style="left:418px;top:1014px;width:1px;height:20px;background:#e0e0e0"></div>
<div class="a" style="left:505px;top:1014px;width:1px;height:20px;background:#e0e0e0"></div>
<div class="a" style="left:592px;top:1014px;width:1px;height:20px;background:#e0e0e0"></div>
<div class="a" style="left:1629px;top:1014px;width:1px;height:20px;background:#e0e0e0"></div>
<svg style="left:427px;top:1020px;" width="16" height="13" viewBox="0 0 16 13"><path d="M1 1H7L8 1.8L9 1H15V10.4H9.2L8 11.6L6.8 10.4H1Z" fill="none" stroke="#555" stroke-width="1.1"/><path d="M5.6 5.6L7.8 7.6L11.6 3.4" fill="none" stroke="#555" stroke-width="1.1"/></svg>
<svg style="left:514px;top:1020px;" width="16" height="13" viewBox="0 0 16 13"><path d="M1 1H7L8 1.8L9 1H15V10.4H9.2L8 11.6L6.8 10.4H1Z" fill="none" stroke="#555" stroke-width="1.1"/><path d="M6.8 3.6L10.8 7.6M10.8 3.6L6.8 7.6" fill="none" stroke="#555" stroke-width="1.1"/></svg>
<svg style="left:604px;top:1017px;" width="16" height="18" viewBox="0 0 16 18"><path d="M8 1L14.6 4.8V12.6L8 16.4L1.4 12.6V4.8Z" fill="none" stroke="#6a6a6a" stroke-width="1.1"/><path d="M5.5 6.5L10.5 11.5M10.5 6.5L5.5 11.5" fill="none" stroke="#555" stroke-width="1.1"/></svg>
<svg style="left:1471px;top:1018px;" width="16" height="16" viewBox="0 0 16 16"><path d="M1 5V1H5M11 1H15V5M15 11V15H11M5 15H1V11 M1.5 14.5L6 10M14.5 1.5L10 6" fill="none" stroke="#555" stroke-width="1.1"/></svg>
<svg style="left:1496px;top:1019px;" width="16" height="15" viewBox="0 0 16 15"><path d="M1 1.2H6A2 2 0 0 1 8 3.2V14.5M15 1.2H10A2 2 0 0 0 8 3.2 M1 1.2V13.6H15V1.2" fill="none" stroke="#555" stroke-width="1.1"/></svg>
<div class="a" style="left:1520px;top:1014px;width:22px;height:20px;background:#cfcfcf;border-radius:2px 2px 0 0"></div>
<svg style="left:1524px;top:1018px;" width="15" height="16" viewBox="0 0 15 16"><path d="M1 1.6A1 1 0 0 1 2 0.6H9.4L13.4 4.6V14.2A1 1 0 0 1 12.4 15.2H2A1 1 0 0 1 1 14.2Z M9.4 0.6V4.6H13.4 M4 8H10.5M4 11H10.5" fill="none" stroke="#555" stroke-width="1.1"/></svg>
<svg style="left:1548px;top:1018px;" width="16" height="16" viewBox="0 0 16 16"><rect x="0.8" y="0.8" width="14" height="14" rx="1" fill="none" stroke="#555" stroke-width="1.1"/><path d="M3.5 4H4.6M6.3 4H12.5M3.5 7.6H4.6M6.3 7.6H12.5M3.5 11.2H4.6M6.3 11.2H12.5" fill="none" stroke="#555" stroke-width="1.1"/></svg>
<svg style="left:1574px;top:1018px;" width="16" height="16" viewBox="0 0 16 16"><circle cx="8" cy="8" r="7" fill="none" stroke="#555" stroke-width="1.1"/><ellipse cx="8" cy="8" rx="3.2" ry="7" fill="none" stroke="#555" stroke-width="1.1"/><path d="M1 8H15M2 4.5H14M2 11.5H14" fill="none" stroke="#555" stroke-width="1.1"/></svg>
<svg style="left:1599px;top:1017px;" width="18" height="17" viewBox="0 0 18 17"><path d="M1 10.5C3.5 6.5 14.5 6.5 17 10.5C14.5 14.8 3.5 14.8 1 10.5Z" fill="none" stroke="#555" stroke-width="1.1"/><circle cx="9" cy="10.6" r="2.6" fill="none" stroke="#555" stroke-width="1.1"/><path d="M9 0.4V3.3M3 2L4.7 4.3M15 2L13.3 4.3" fill="none" stroke="#555" stroke-width="1.1"/></svg>
<svg style="left:1678px;top:1025px" width="6" height="4" viewBox="0 0 6 4"><path d="M0 0H6L3 3.5Z" fill="#999"/></svg>
<svg style="left:1694px;top:1025px;" width="13" height="3" viewBox="0 0 13 3"><path d="M0.5 1.3H12" stroke="#444" stroke-width="2"/></svg>
<svg style="left:1717px;top:1025px;" width="139" height="3" viewBox="0 0 139 3"><path d="M0 1.2H63" stroke="#6a6a6a" stroke-width="1.1"/><path d="M75 1.2H138" stroke="#9a9a9a" stroke-width="1.1"/></svg>
<svg style="left:1779px;top:1020px;" width="14" height="14" viewBox="0 0 14 14"><circle cx="7" cy="7" r="5.6" fill="#f6f6f6" stroke="#444" stroke-width="1.1"/></svg>
<svg style="left:1865px;top:1019px;" width="14" height="14" viewBox="0 0 14 14"><path d="M7 1V13M1 7H13" stroke="#444" stroke-width="2"/></svg>
<svg style="left:1891px;top:1019px;" width="15" height="14" viewBox="0 0 15 14"><path d="M1 4.5V2A1 1 0 0 1 2 1H4.5M10.5 1H13A1 1 0 0 1 14 2V4.5M14 9.5V12A1 1 0 0 1 13 13H10.5M4.5 13H2A1 1 0 0 1 1 12V9.5" fill="none" stroke="#555" stroke-width="1.1"/><circle cx="7.5" cy="7" r="1" fill="#444"/></svg>
<div class="a" style="left:1906px;top:174px;width:6px;height:572px;background:#fafafa;border:1px solid #bdbdbd;border-right:none;border-radius:4px 0 0 4px"></div>
<div class="a" style="left:1909px;top:970px;width:2px;height:53px;background:#3a3a3a"></div>
<svg style="left:1736px;top:978px;" width="72" height="46" viewBox="0 0 72 46"><path d="M0 26L34 2L66 24H56L34 9L11 25V44H43V38H20V29H45L58 21V28L47 35V46H3V26Z" fill="#fff" opacity="0.92"/><path d="M24 29H45M24 34H44" stroke="#e6e6e6" stroke-width="2"/><path d="M58 22L66 18L70 24L62 28Z M60 32L68 28V33L60 37Z" fill="#fff" opacity="0.9"/></svg>
<div class="t" style="left:1810px;top:987px;font-size:22px;line-height:26px;font-weight:bold;color:#fff;opacity:.95;font-style:italic;letter-spacing:0.5px;-webkit-text-stroke:1.2px #fff">系统之家</div>
<div class="t" style="left:1800px;top:1013px;font-size:9px;line-height:11px;color:#fff;opacity:.8;font-family:'Liberation Serif',serif;letter-spacing:0.5px">XITONGZHIJIA.NET</div>
</body></html>
